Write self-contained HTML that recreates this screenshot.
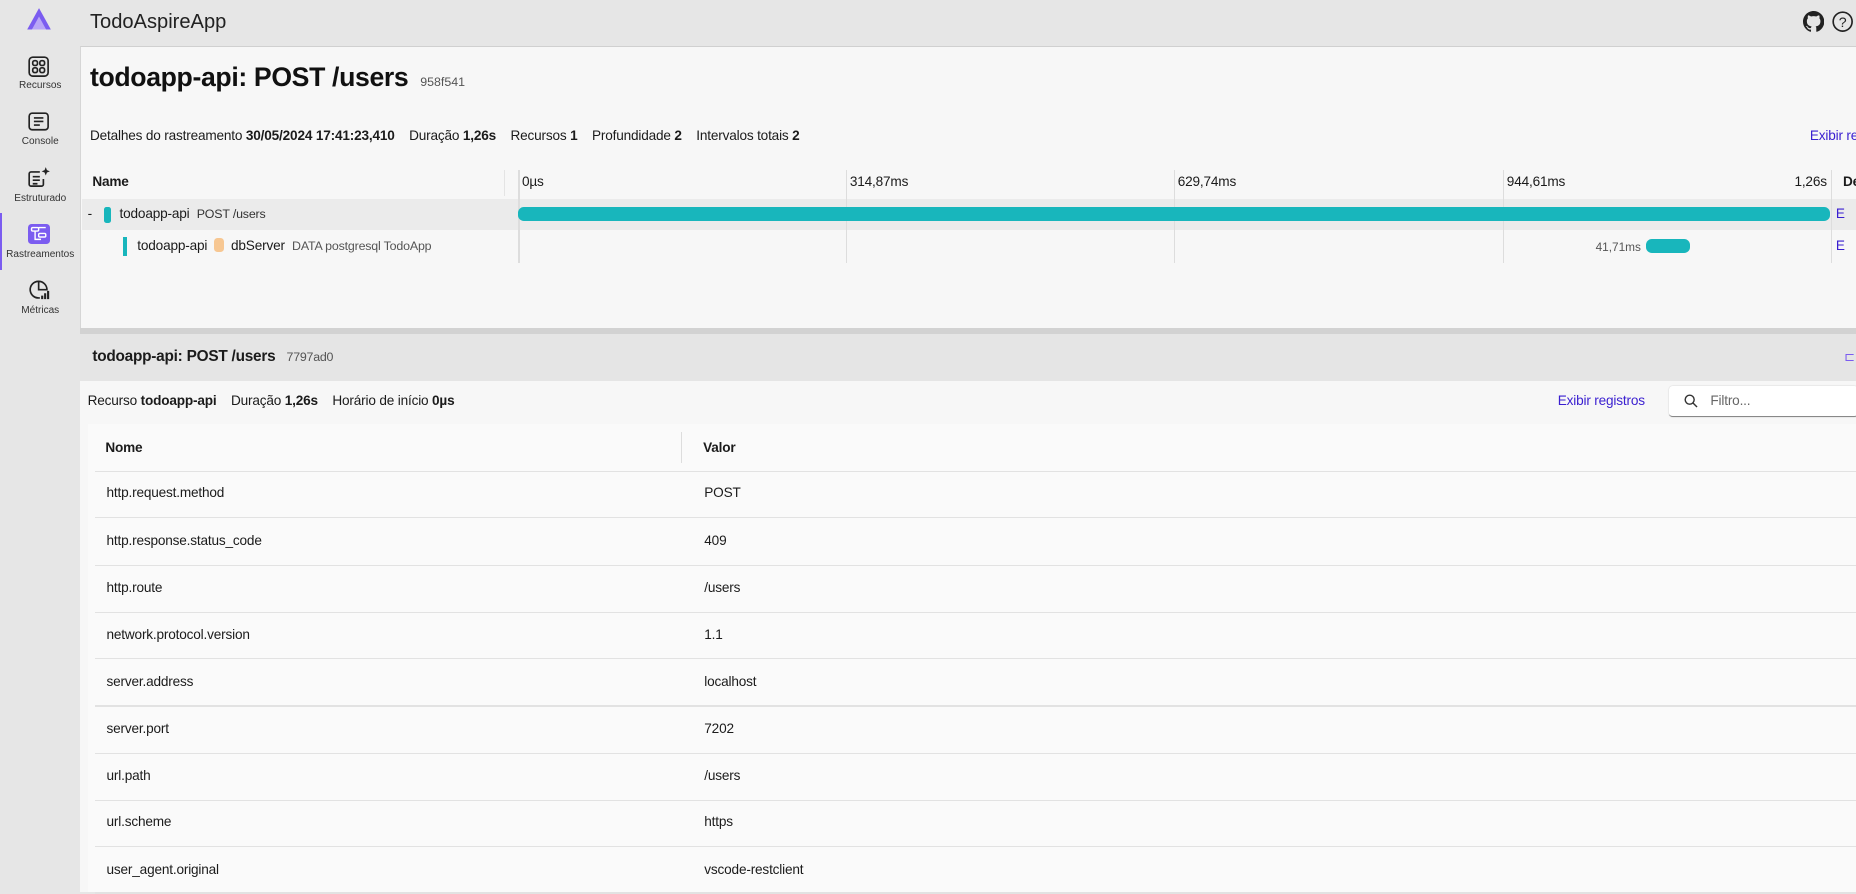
<!DOCTYPE html>
<html><head><meta charset="utf-8"><style>
html{zoom:1.18367}
*{box-sizing:border-box;margin:0;padding:0}
body{width:1568px;height:754px;overflow:hidden;background:#e6e6e6;font-family:"Liberation Sans",sans-serif;color:#1b1b1b;position:relative}
.a{position:absolute;white-space:nowrap}
.nav{width:68px;text-align:center;font-size:8.5px;color:#333}
.main{left:68px;top:39px;width:1500px;height:238px;background:#f7f7f7;border-top:1px solid #d0d0d0;border-left:1px solid #d6d6d6}
.b{font-weight:bold}
.vl{position:absolute;width:1px;background:#ddd}
.row{position:absolute;left:80px;width:1488px;height:1px;background:#e2e2e2}
.t{font-size:11.5px;letter-spacing:-0.15px}
</style></head><body>
<svg class="a" style="left:22px;top:6px" width="22" height="20" viewBox="0 0 22 20"><path d="M11 1 L21 19 H1 Z" fill="#7b5cf0"/><path d="M11 8 L17 19 H5 Z" fill="#b9a6f7"/></svg>
<div class="a" style="left:76px;top:9px;font-size:17px;color:#222">TodoAspireApp</div>
<svg class="a" style="left:1523px;top:9px" width="18" height="18" viewBox="0 0 16 16"><path fill="#222" d="M8 0C3.580 0 0 3.58 0 8c0 3.54 2.29 6.53 5.47 7.59.4.07.55-.17.55-.38v-1.33c-2.23.48-2.7-1.07-2.7-1.070-.36-.92-.89-1.17-.89-1.17-.73-.5.05-.49.05-.49.8.06 1.23.83 1.23.83.72 1.22 1.87.87 2.33.66.07-.52.28-.87.5-1.07-1.78-.2-3.64-.89-3.64-3.95 0-.87.31-1.59.82-2.15-.08-.2-.36-1.02.08-2.12 0 0 .67-.21 2.2.82a7.6 7.6 0 0 1 4 0c1.53-1.04 2.2-.82 2.2-.82.44 1.1.16 1.92.08 2.12.51.56.82 1.27.82 2.15 0 3.07-1.87 3.75-3.65 3.95.29.25.54.73.54 1.48v2.2c0 .21.15.46.55.38A8 8 0 0 0 16 8c0-4.42-3.58-8-8-8z"/></svg>
<svg class="a" style="left:1548px;top:9px" width="18" height="18" viewBox="0 0 18 18"><circle cx="9" cy="9" r="8" fill="none" stroke="#222" stroke-width="1.4"/><text x="9" y="13.5" font-size="12" text-anchor="middle" font-family="Liberation Sans" fill="#222">?</text></svg>
<svg class="a" style="left:24px;top:47px" width="18" height="18" viewBox="0 0 18 18" fill="none" stroke="#222" stroke-width="1.4"><rect x="1" y="1" width="16" height="16" rx="3"/><rect x="4" y="4" width="4" height="4" rx="1.5"/><rect x="10" y="4" width="4" height="4" rx="1.5"/><rect x="4" y="10" width="4" height="4" rx="1.5"/><rect x="10" y="10" width="4" height="4" rx="1.5"/></svg>
<div class="a nav" style="left:0;top:68px">Recursos</div>
<svg class="a" style="left:24px;top:95px" width="18" height="16" viewBox="0 0 18 16" fill="none" stroke="#222" stroke-width="1.4"><rect x="1" y="1" width="16" height="14" rx="2.5"/><path d="M5 5h8M5 8h8M5 11h5"/></svg>
<div class="a nav" style="left:0;top:115px">Console</div>
<svg class="a" style="left:24px;top:140px" width="19" height="18" viewBox="0 0 19 18" fill="none" stroke="#222" stroke-width="1.4"><path d="M13 11v4.5a1.5 1.5 0 0 1-1.5 1.5h-9A1.5 1.5 0 0 1 1 15.5v-9A1.5 1.5 0 0 1 2.5 5H10"/><path d="M4 9h6M4 12h6M4 15h4"/><path d="M15 1l1 2.5 2.5 1-2.5 1-1 2.5-1-2.5-2.5-1 2.5-1z" fill="#222" stroke="none"/></svg>
<div class="a nav" style="left:0;top:163px">Estruturado</div>
<div class="a" style="left:0;top:180px;width:2px;height:48px;background:#7b5cf0"></div>
<div class="a" style="left:24px;top:189px;width:18px;height:17px;background:#7b5cf0;border-radius:3px"></div>
<svg class="a" style="left:24px;top:189px" width="18" height="17" viewBox="0 0 18 17" fill="none" stroke="#fff" stroke-width="1.2"><rect x="3" y="3" width="6" height="3" rx="1"/><rect x="9" y="8" width="6" height="3" rx="1"/><path d="M6 6v7h5M9 3h6"/></svg>
<div class="a nav" style="left:0;top:210px">Rastreamentos</div>
<svg class="a" style="left:24px;top:236px" width="19" height="19" viewBox="0 0 19 19" fill="none" stroke="#222" stroke-width="1.4"><path d="M9 2a7 7 0 1 0 1 13.9"/><path d="M9 2v7h7a7 7 0 0 0-7-7z"/><path d="M12 17v-3M14.5 17v-5M17 17v-7" stroke-width="1.8"/></svg>
<div class="a nav" style="left:0;top:258px">Métricas</div>
<div class="a main"></div>
<div class="a" style="left:76px;top:52px;font-size:22.5px;font-weight:bold;color:#111;letter-spacing:-0.3px">todoapp-api: POST /users<span style="font-weight:normal;font-size:10.5px;color:#555;margin-left:10px;letter-spacing:0">958f541</span></div>
<div class="a t" style="left:76px;top:108px">Detalhes do rastreamento <b>30/05/2024 17:41:23,410</b> &nbsp;&nbsp; Duração <b>1,26s</b> &nbsp;&nbsp; Recursos <b>1</b> &nbsp;&nbsp; Profundidade <b>2</b> &nbsp;&nbsp; Intervalos totais <b>2</b></div>
<div class="a t" style="left:1529px;top:108px;color:#3a1fd0">Exibir re</div>
<div class="a t b" style="left:78px;top:147px">Name</div>
<div class="vl" style="left:426px;top:144px;height:22px;background:#e4e4e4"></div>
<div class="a t" style="left:441px;top:147px">0µs</div>
<div class="a t" style="left:718px;top:147px">314,87ms</div>
<div class="a t" style="left:995px;top:147px">629,74ms</div>
<div class="a t" style="left:1273px;top:147px">944,61ms</div>
<div class="a t" style="left:1516px;top:147px">1,26s</div>
<div class="a t b" style="left:1557px;top:147px">De</div>
<div class="a" style="left:69px;top:168px;width:1499px;height:26px;background:#ebebeb"></div>
<div class="vl" style="left:438px;top:144px;height:78px"></div>
<div class="vl" style="left:715px;top:144px;height:78px"></div>
<div class="vl" style="left:992px;top:144px;height:78px"></div>
<div class="vl" style="left:1270px;top:144px;height:78px"></div>
<div class="vl" style="left:1547px;top:144px;height:78px"></div>
<div class="a t" style="left:74px;top:174px">-</div>
<div class="a" style="left:88px;top:175px;width:6px;height:13px;background:#18b6bc;border-radius:2px"></div>
<div class="a t" style="left:101px;top:174px">todoapp-api &nbsp;<span style="font-size:10.5px;color:#333">POST /users</span></div>
<div class="a" style="left:438px;top:175px;width:1108px;height:12px;background:#18b6bc;border-radius:5px"></div>
<div class="a t" style="left:1551px;top:174px;color:#3a1fd0">E</div>
<div class="a" style="left:104px;top:200px;width:3px;height:16px;background:#18b6bc"></div>
<div class="a t" style="left:116px;top:201px">todoapp-api <span style="display:inline-block;width:8px;height:12px;background:#f7c792;border-radius:3px;vertical-align:-2px;margin:0 3px"></span> dbServer &nbsp;<span style="font-size:10.5px;color:#555">DATA postgresql TodoApp</span></div>
<div class="a" style="left:1348px;top:203px;font-size:10px;color:#555">41,71ms</div>
<div class="a" style="left:1391px;top:202px;width:37px;height:12px;background:#18b6bc;border-radius:5px"></div>
<div class="a t" style="left:1551px;top:201px;color:#3a1fd0">E</div>
<div class="a" style="left:68px;top:277px;width:1500px;height:5px;background:#d2d2d2"></div>
<div class="a" style="left:68px;top:282px;width:1500px;height:40px;background:#e5e5e5"></div>
<div class="a b" style="left:78px;top:294px;font-size:13px;letter-spacing:-0.2px">todoapp-api: POST /users <span style="font-weight:normal;font-size:10.5px;color:#555;margin-left:6px">7797ad0</span></div>
<div class="a" style="left:1558px;top:295px;font-size:11px;color:#7b5cf0">⊏</div>
<div class="a" style="left:68px;top:322px;width:1500px;height:432px;background:#f7f7f7"></div>
<div class="a t" style="left:74px;top:332px">Recurso <b>todoapp-api</b> &nbsp;&nbsp; Duração <b>1,26s</b> &nbsp;&nbsp; Horário de início <b>0µs</b></div>
<div class="a t" style="left:1316px;top:332px;color:#3a1fd0">Exibir registros</div>
<div class="a" style="left:1410px;top:326px;width:160px;height:26px;background:#fff;border-radius:3px;border-bottom:1px solid #888;box-shadow:0 0 1px #bbb"></div>
<svg class="a" style="left:1423px;top:333px" width="12" height="12" viewBox="0 0 12 12" fill="none" stroke="#333" stroke-width="1.2"><circle cx="4.8" cy="4.8" r="3.8"/><path d="M7.6 7.6L11 11"/></svg>
<div class="a t" style="left:1445px;top:332px;color:#666">Filtro...</div>
<div class="a" style="left:74px;top:358px;width:1494px;height:396px;background:#fafafa"></div>
<div class="a t b" style="left:89px;top:372px">Nome</div>
<div class="vl" style="left:575px;top:365px;height:26px"></div>
<div class="a t b" style="left:594px;top:372px">Valor</div>
<div class="row" style="top:398px"></div>
<div class="a t" style="left:90px;top:410px">http.request.method</div><div class="a t" style="left:595px;top:410px">POST</div>
<div class="row" style="top:437px"></div>
<div class="a t" style="left:90px;top:450px">http.response.status_code</div><div class="a t" style="left:595px;top:450px">409</div>
<div class="row" style="top:477px"></div>
<div class="a t" style="left:90px;top:490px">http.route</div><div class="a t" style="left:595px;top:490px">/users</div>
<div class="row" style="top:517px"></div>
<div class="a t" style="left:90px;top:530px">network.protocol.version</div><div class="a t" style="left:595px;top:530px">1.1</div>
<div class="row" style="top:556px"></div>
<div class="a t" style="left:90px;top:569px">server.address</div><div class="a t" style="left:595px;top:569px">localhost</div>
<div class="row" style="top:596px"></div>
<div class="a t" style="left:90px;top:609px">server.port</div><div class="a t" style="left:595px;top:609px">7202</div>
<div class="row" style="top:636px"></div>
<div class="a t" style="left:90px;top:649px">url.path</div><div class="a t" style="left:595px;top:649px">/users</div>
<div class="row" style="top:676px"></div>
<div class="a t" style="left:90px;top:688px">url.scheme</div><div class="a t" style="left:595px;top:688px">https</div>
<div class="row" style="top:715px"></div>
<div class="a t" style="left:90px;top:728px">user_agent.original</div><div class="a t" style="left:595px;top:728px">vscode-restclient</div>
<div class="row" style="top:754px"></div>
</body></html>
